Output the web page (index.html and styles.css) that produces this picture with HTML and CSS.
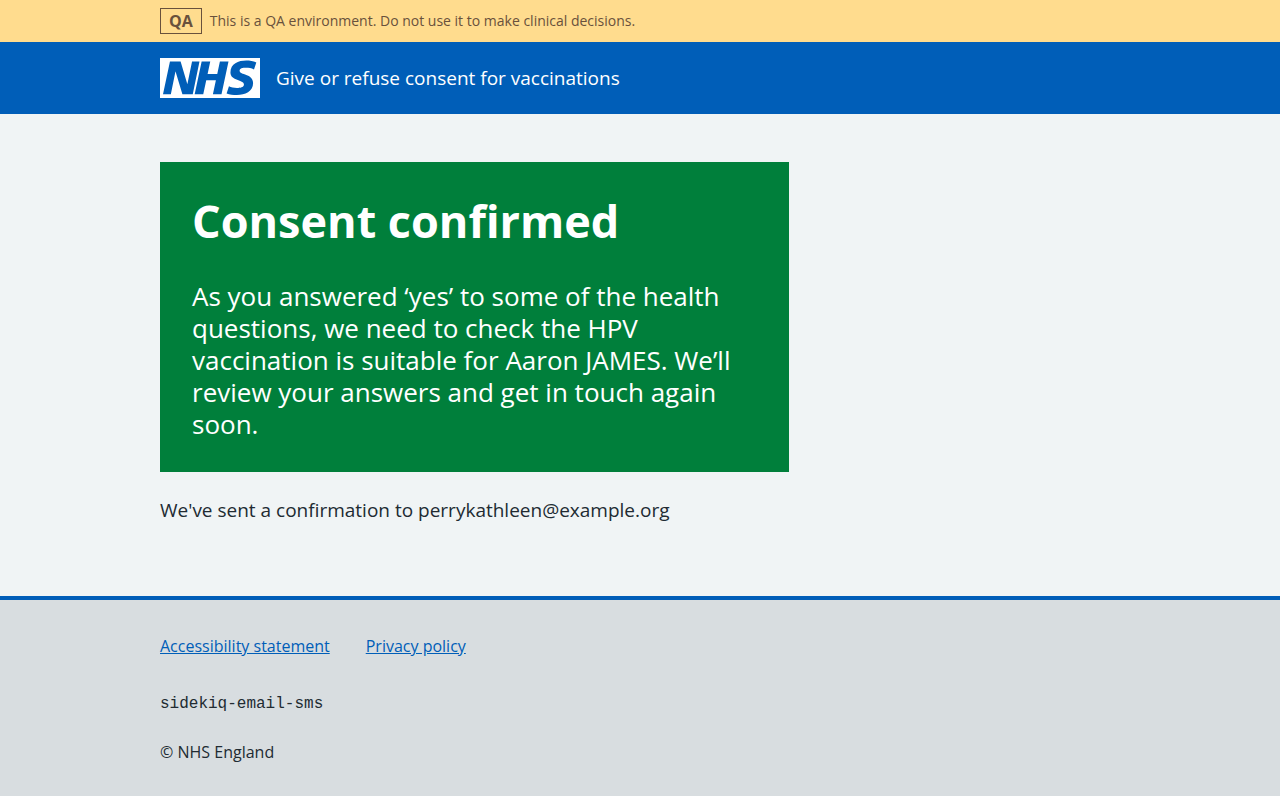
FILE: index.html
```html
<!DOCTYPE html>
<html lang="en">
<head>
<meta charset="utf-8">
<meta name="viewport" content="width=device-width, initial-scale=1">
<title>Consent confirmed</title>
<link rel="stylesheet" href="styles.css">
</head>
<body>
<div class="environment">
  <div class="container environment-row">
    <strong class="environment-tag">QA</strong>
    <span>This is a QA environment. Do not use it to make clinical decisions.</span>
  </div>
</div>
<header class="header">
  <div class="container">
    <a class="header-link" href="#">
      <svg class="logo" viewBox="0 0 200 80" role="img" aria-label="NHS">
        <path fill="#fff" d="M0 0h200v80H0z"/>
        <path fill="#005eb8" d="M172.600 5c7.200 0 14.600 1.400 20 3.800l-4.600 14c-5.400-2.300-10.400-3.200-16-3.200-7 0-12.800 1-12.800 6 0 8.800 27 5.500 27 24.500 0 17.300-16.200 23.900-32.400 23.900-7 0-14.800-1.200-20.600-3.100l4.700-14.300c4 2.200 9.800 3.200 16 3.200 6 0 14-1.100 14-7 0-10.200-27-6.400-27-23.900C140.900 11.100 156.800 5 172.600 5zM79 7 65.500 72.500H44.800L31.100 26.900h-.2L21.700 72.500H6L19.900 7h21.300l13.400 45.100h.2L64.100 7zM137 7l-14 65.500h-17.200l6-28.200H92.500l-6 28.200H69.300l14-65.500h17.200l-5.300 25h19.300l5.300-25z"/>
      </svg>
      <span>Give or refuse consent for vaccinations</span>
    </a>
  </div>
</header>
<main class="container main">
  <div class="content">
    <div class="panel">
      <h1 class="panel-title">Consent confirmed</h1>
      <div class="panel-body">As you answered ‘yes’ to some of the health questions, we need to check the HPV vaccination is suitable for Aaron JAMES. We’ll review your answers and get in touch again soon.</div>
    </div>
    <p class="body-text">We've sent a confirmation to perrykathleen@example.org</p>
  </div>
</main>
<footer class="footer">
  <div class="container">
    <ul class="footer-list">
      <li><a href="#">Accessibility statement</a></li>
      <li><a href="#">Privacy policy</a></li>
    </ul>
    <p class="footer-version"><code>sidekiq-email-sms</code></p>
    <p class="footer-copyright">© NHS England</p>
  </div>
</footer>
</body>
</html>
```
FILE: styles.css
```css
* { box-sizing: border-box; }
body {
  margin: 0;
  min-height: 100vh;
  display: flex;
  flex-direction: column;
  background: #f0f4f5;
  color: #212b32;
  font-family: "Frutiger W01", "Open Sans", "Noto Sans", sans-serif;
}
.container {
  width: calc(100% - 64px);
  max-width: 960px;
  margin: 0 auto;
}
.environment {
  background: #ffdc8e;
  color: #69513c;
  font-size: 14px;
  font-weight: 500;
  line-height: 24px;
  padding: 8px 0;
}
.environment-row { display: flex; align-items: center; gap: 8px; }
.environment-tag {
  border: 1px solid currentColor;
  padding: 0 8px;
  font-size: 16px;
  font-weight: 700;
}
.header { background: #005eb8; padding: 16px 0; }
.header-link {
  display: flex;
  align-items: center;
  gap: 16px;
  color: #fff;
  font-size: 19px;
  font-weight: 500;
  line-height: 28px;
  text-decoration: none;
}
.logo { display: block; flex: none; width: 100px; height: 40px; }
.main { flex: 1; padding: 48px 0; }
.content { max-width: 629px; }
.panel {
  background: #007f3b;
  color: #fff;
  padding: 32px;
  margin-bottom: 24px;
}
.panel-title { margin: 0 0 32px; font-size: 45px; font-weight: 700; line-height: 54px; }
.panel-body { font-size: 26px; font-weight: 500; line-height: 32px; }
.body-text { margin: 0; font-size: 19px; font-weight: 500; line-height: 28px; }
.footer {
  background: #d8dde0;
  border-top: 4px solid #005eb8;
  padding: 32px 0;
  font-size: 16px;
  line-height: 24px;
}
.footer-list {
  display: flex;
  flex-wrap: wrap;
  gap: 36px;
  margin: 0 0 30px;
  padding: 0;
  line-height: 28px;
  list-style: none;
}
.footer a { color: #005eb8; }
.footer p { margin: 0; }
.footer .footer-version { margin-bottom: 24px; }
.footer code { font-family: "Liberation Mono", monospace; }
```
